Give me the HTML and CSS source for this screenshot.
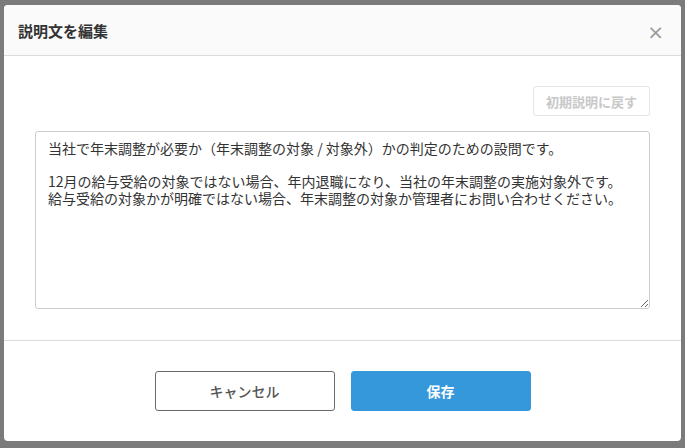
FILE: index.html
```html
<!DOCTYPE html>
<html lang="ja">
<head>
<meta charset="utf-8">
<link rel="stylesheet" href="styles.css">
</head>
<body>
<div class="backdrop">
  <div class="modal">
    <div class="modal-header">
      <h2 class="modal-title">説明文を編集</h2>
      <span class="close">×</span>
    </div>
    <div class="modal-body">
      <div class="reset-row">
        <button class="btn-reset" disabled>初期説明に戻す</button>
      </div>
      <textarea class="desc">当社で年末調整が必要か（年末調整の対象 / 対象外）かの判定のための設問です。

12月の給与受給の対象ではない場合、年内退職になり、当社の年末調整の実施対象外です。
給与受給の対象かが明確ではない場合、年末調整の対象か管理者にお問い合わせください。</textarea>
    </div>
    <div class="modal-footer">
      <button class="btn btn-cancel">キャンセル</button>
      <button class="btn btn-save">保存</button>
    </div>
  </div>
</div>
</body>
</html>
```
FILE: styles.css
```css
* { box-sizing: border-box; }
html, body { margin: 0; padding: 0; }
body {
  width: 685px;
  height: 448px;
  overflow: hidden;
  background: #7b7b7b;
  font-family: "Noto Sans CJK JP", "Noto Sans", sans-serif;
}
.backdrop {
  padding: 5px 4px 0 4px;
}
.modal {
  width: 677px;
  height: 436px;
  background: #fff;
  border-radius: 4px;
  overflow: hidden;
  display: flex;
  flex-direction: column;
}
.modal-header {
  height: 51px;
  flex: none;
  background: #fafafa;
  border-bottom: 1px solid #dcdcdc;
  display: flex;
  align-items: center;
  justify-content: space-between;
  padding: 0 17px 0 14px;
}
.modal-title {
  margin: 0;
  font-size: 15px;
  font-weight: bold;
  color: #333;
}
.close {
  font-family: "DejaVu Sans", sans-serif;
  font-size: 20px;
  color: #9a9a9a;
  line-height: 1;
  margin-top: 3px;
}
.modal-body {
  height: 285px;
  flex: none;
  border-bottom: 1px solid #dcdcdc;
  padding: 30px 31px 0 31px;
  display: flex;
  flex-direction: column;
}
.reset-row {
  display: flex;
  justify-content: flex-end;
  margin-bottom: 15px;
}
.btn-reset {
  width: 117px;
  height: 30px;
  background: #fff;
  border: 1px solid #e4e4e4;
  border-radius: 3px;
  color: #c8c8c8;
  font-family: inherit;
  font-size: 13px;
  font-weight: bold;
  padding: 0;
}
.desc {
  display: block;
  width: 615px;
  height: 178px;
  border: 1px solid #cccccc;
  border-radius: 3px;
  padding: 8px 12px;
  font-family: "Noto Sans CJK JP", sans-serif;
  font-size: 14px;
  line-height: 16.5px;
  color: #333;
  resize: vertical;
  margin: 0;
}
.modal-footer {
  flex: 1;
  display: flex;
  justify-content: center;
  align-items: flex-start;
  gap: 16px;
  padding-top: 30px;
}
.btn {
  width: 180px;
  height: 40px;
  border-radius: 3px;
  font-family: inherit;
  font-size: 14px;
  font-weight: bold;
  padding: 0;
}
.btn-cancel {
  background: #fff;
  border: 1px solid #6a6a6a;
  color: #555;
  font-weight: 500;
}
.btn-save {
  background: #3598db;
  border: 1px solid #3598db;
  color: #fff;
}
```
